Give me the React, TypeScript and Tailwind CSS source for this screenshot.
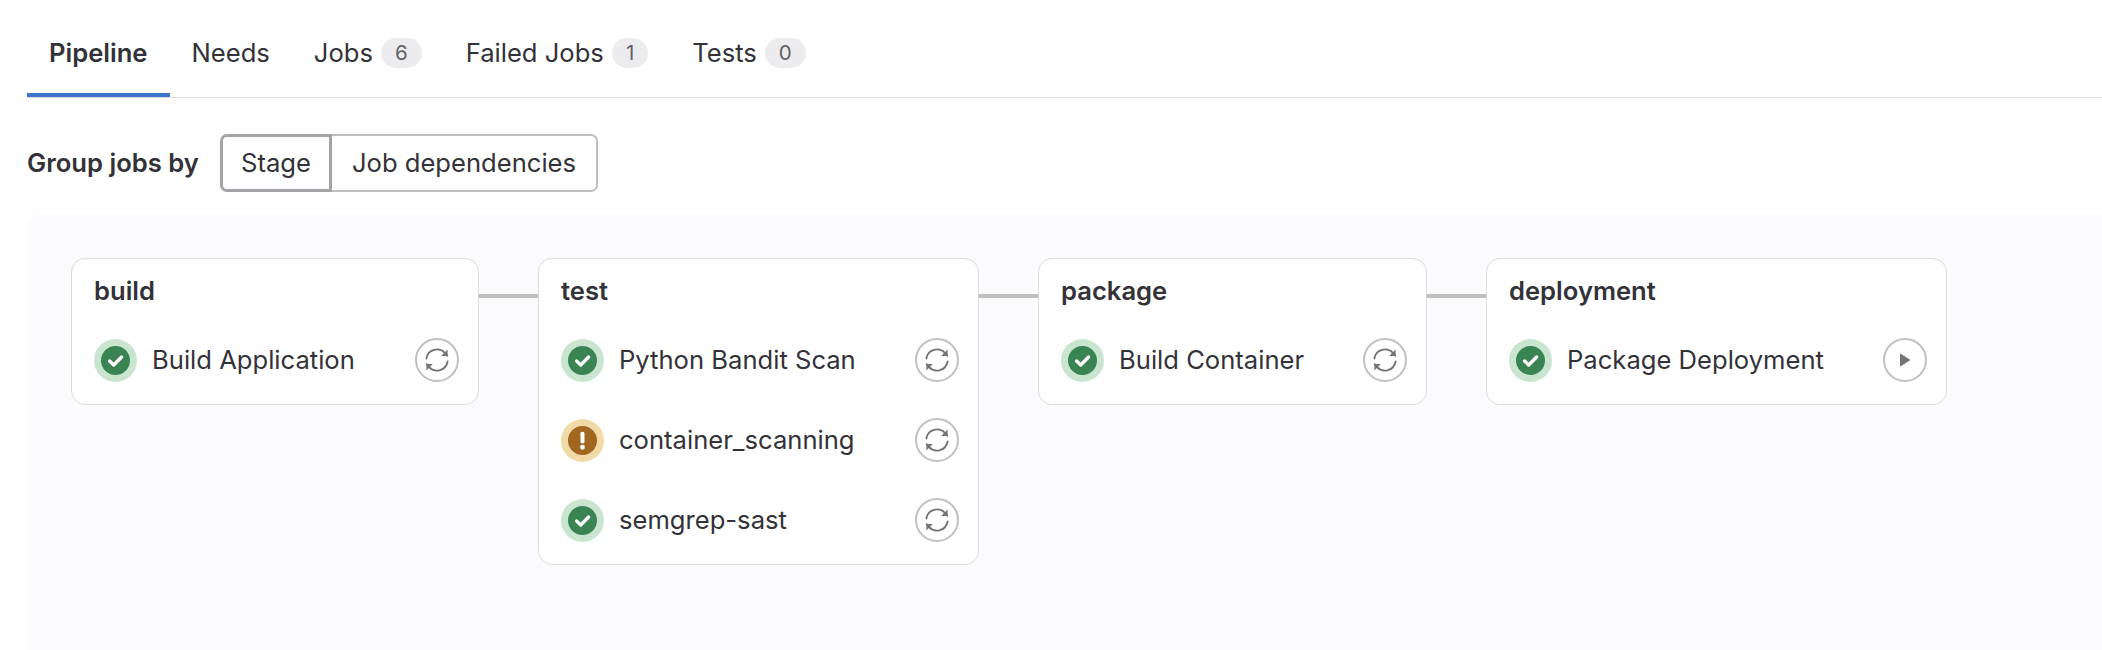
const FONT = "font-['Inter','Liberation_Sans',sans-serif]";

function Count({ n }: { n: number }) {
  return (
    <span className="ml-[8px] flex h-[30px] items-center justify-center rounded-full bg-[#ececef] px-[14px] text-[20.5px] leading-none text-[#626168]">
      {n}
    </span>
  );
}

function Tab({ label, count, active }: { label: string; count?: number; active?: boolean }) {
  return (
    <div
      className={`flex h-[97px] items-center justify-center border-b-[4px] px-[22px] pt-[13px] text-[25.6px] text-[#333238] ${
        active ? "border-[#3a73c9] font-semibold" : "border-transparent"
      }`}
    >
      {label}
      {count !== undefined && <Count n={count} />}
    </div>
  );
}

function StatusIcon({ kind }: { kind: "success" | "warning" }) {
  const ok = kind === "success";
  return (
    <span
      className={`flex h-[43px] w-[43px] shrink-0 items-center justify-center rounded-full ${
        ok ? "bg-[#c9e5d0]" : "bg-[#f1d9a8]"
      }`}
    >
      <svg width="29" height="29" viewBox="0 0 29 29">
        <circle cx="14.5" cy="14.5" r="14.5" fill={ok ? "#3a8352" : "#a1661f"} />
        {ok ? (
          <path d="M8.6 15l4.1 4L20.6 11" fill="none" stroke="#fff" strokeWidth="3.3" strokeLinecap="round" strokeLinejoin="round" />
        ) : (
          <>
            <rect x="12.5" y="5.8" width="4" height="11.6" rx="1.6" fill="#fff" />
            <rect x="12.3" y="19" width="4.4" height="4.4" rx="1.4" fill="#fff" />
          </>
        )}
      </svg>
    </span>
  );
}

function ActionIcon({ kind }: { kind: "retry" | "play" }) {
  return (
    <span className="flex h-[44px] w-[44px] shrink-0 items-center justify-center rounded-full border-2 border-[#bfbfc3] bg-white">
      {kind === "retry" ? (
        <svg width="26" height="26" viewBox="0 0 24 24" fill="none" stroke="#737278" strokeWidth="1.7" strokeLinecap="round" strokeLinejoin="round">
          <path d="M2.2 10.6A10 10 0 0 1 19.3 5.4L21.4 8" />
          <path d="M21.8 13.4A10 10 0 0 1 4.7 18.6L2.6 16" />
          <path d="M21.8 2.4v6h-6" fill="#737278" strokeWidth="0" />
          <path d="M2.2 21.6v-6h6" fill="#737278" strokeWidth="0" />
        </svg>
      ) : (
        <svg width="12" height="16" viewBox="0 0 12 16">
          <path d="M1 1.2v13.6L11.4 8z" fill="#737278" />
        </svg>
      )}
    </span>
  );
}

type Job = { name: string; status: "success" | "warning"; action: "retry" | "play" };

function Stage({ title, jobs, width }: { title: string; jobs: Job[]; width: string }) {
  return (
    <div className={`rounded-[14px] border border-[#dcdcde] bg-white pb-[22px] pl-[22px] pr-[19px] pt-[15px] ${width}`}>
      <div className="h-[34px] text-[25.6px] font-semibold leading-[34px] text-[#333238]">{title}</div>
      <div className="mt-[30px] flex flex-col gap-[36px]">
        {jobs.map((j) => (
          <div key={j.name} className="flex h-[44px] items-center">
            <StatusIcon kind={j.status} />
            <span className="ml-[15px] flex-1 text-[25.6px] text-[#333238]">{j.name}</span>
            <ActionIcon kind={j.action} />
          </div>
        ))}
      </div>
    </div>
  );
}

function Link() {
  return <div className="mt-[36px] h-[4px] w-[59px] shrink-0 bg-[#bfbfc3]" />;
}

export default function App() {
  return (
    <div className={`${FONT} h-[650px] w-[2102px] overflow-hidden bg-white`}>
      <div className="ml-[27px] flex border-b border-[#dcdcde]">
        <Tab label="Pipeline" active />
        <Tab label="Needs" />
        <Tab label="Jobs" count={6} />
        <Tab label="Failed Jobs" count={1} />
        <Tab label="Tests" count={0} />
      </div>

      <div className="ml-[27px] mt-[36px] flex items-center">
        <span className="w-[193px] text-[25.6px] font-semibold text-[#333238]">Group jobs by</span>
        <div className="flex h-[58px] text-[25.6px] text-[#333238]">
          <div className="flex w-[112px] items-center justify-center rounded-l-[7px] border-[3px] border-[#a4a3a8] bg-white">Stage</div>
          <div className="flex w-[266px] items-center justify-center rounded-r-[7px] border-2 border-l-0 border-[#bfbfc3] bg-white">Job dependencies</div>
        </div>
      </div>

      <div className="ml-[27px] mt-[22px] flex h-[436px] items-start rounded-tl-[14px] bg-[#fbfafd] pl-[44px] pt-[44px]">
        <Stage title="build" width="w-[408px]" jobs={[{ name: "Build Application", status: "success", action: "retry" }]} />
        <Link />
        <Stage
          title="test"
          width="w-[441px]"
          jobs={[
            { name: "Python Bandit Scan", status: "success", action: "retry" },
            { name: "container_scanning", status: "warning", action: "retry" },
            { name: "semgrep-sast", status: "success", action: "retry" },
          ]}
        />
        <Link />
        <Stage title="package" width="w-[389px]" jobs={[{ name: "Build Container", status: "success", action: "retry" }]} />
        <Link />
        <Stage title="deployment" width="w-[461px]" jobs={[{ name: "Package Deployment", status: "success", action: "play" }]} />
      </div>
    </div>
  );
}
